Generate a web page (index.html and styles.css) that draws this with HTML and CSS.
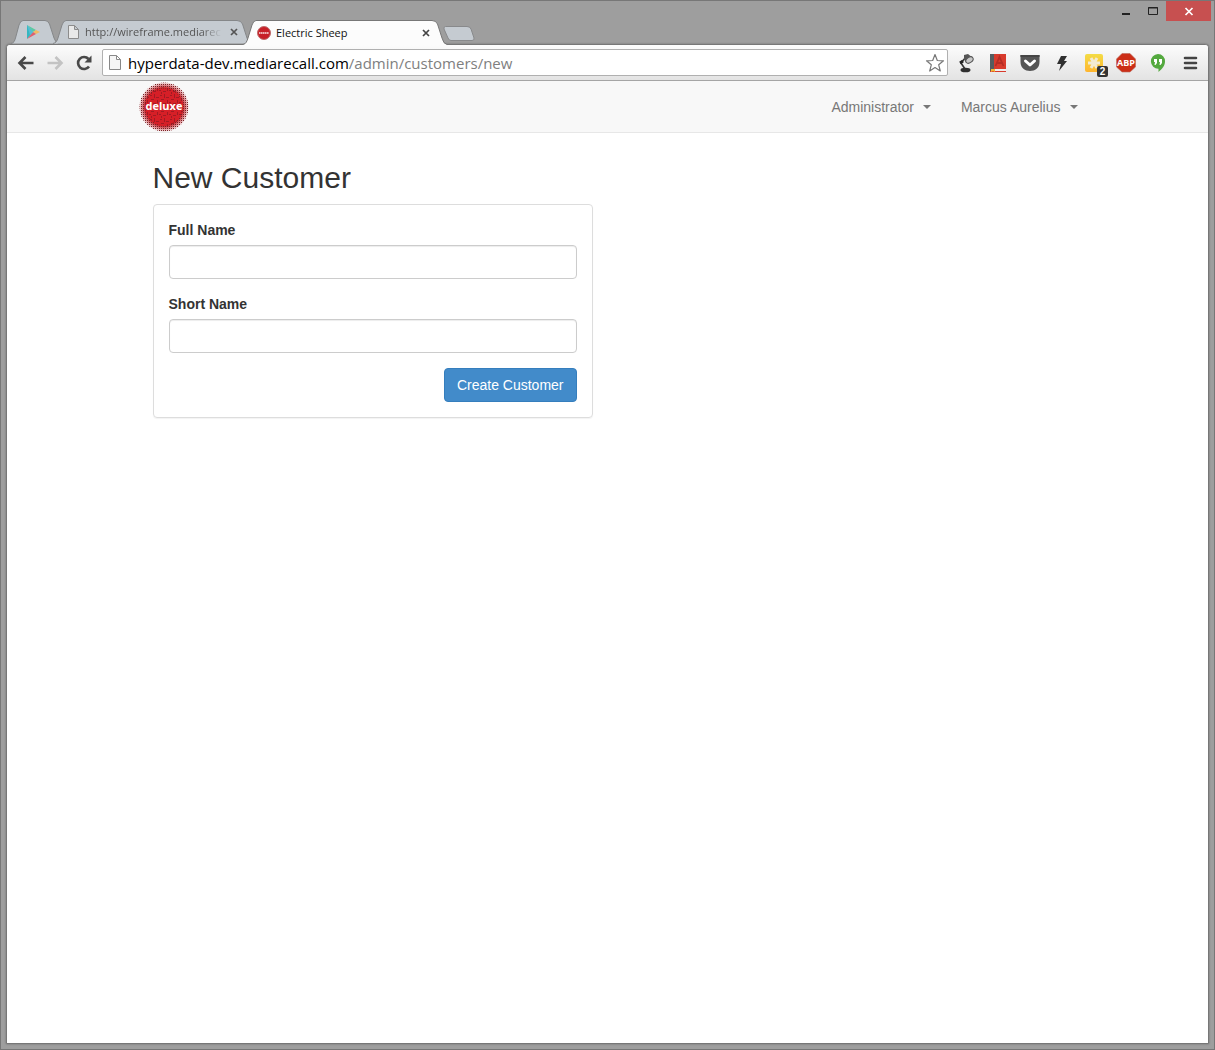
FILE: index.html
```html
<!DOCTYPE html>
<html lang="en">
<head>
<meta charset="utf-8">
<title>Electric Sheep</title>
<link rel="stylesheet" href="styles.css">
</head>
<body>
<div class="frame">
  <header class="titlebar">
    <div class="tabs">
      <button class="tab tab-pinned" aria-label="Play Store">
        <svg class="tab-shape" viewBox="0 0 48 24"><path d="M0 23.5C3 23 3.500 21 4.500 18L8 5Q9.500.5 12 .5H34Q37 .5 38.500 4L43 18Q44.500 23 48 23.500" fill="#c5cbd1" stroke="#858789"/></svg>
        <svg class="icon" width="16" height="16" viewBox="0 0 16 16"><path d="M2 1V15L8 8z" fill="#35b7c0"/><path d="M2 1L11 6 8 8z" fill="#5bcaa3"/><path d="M11 6L15 8 11 10 8 8z" fill="#f1ba63"/><path d="M2 15L11 10 8 8z" fill="#dd6170"/><path d="M2 1L8 8 5 11z" fill="#54bdd6"/></svg>
      </button>
      <div class="tab tab-back">
        <svg class="tab-shape" viewBox="0 0 198 24"><path d="M0 23.500C3 23 4 21 5 18L9 5Q10.500.5 13 .5H184Q188 .5 189.500 4L194 18Q195.500 23 198 23.500" fill="#c5cbd1" stroke="#858789"/></svg>
        <svg class="icon" width="16" height="16" viewBox="0 0 16 16"><path d="M3.500 1.500H9.500L13.500 5.500V14.500H3.500zM9.500 1.500V5.500H13.500" fill="#e9e9e9" stroke="#8c8c8c"/></svg>
        <button class="tab-title">http://wireframe.mediarec</button>
        <button class="tab-close" aria-label="Close tab"><svg width="8" height="8" viewBox="0 0 8 8"><path d="M1 1L7 7M7 1L1 7" stroke="#555" stroke-width="1.700"/></svg></button>
      </div>
      <div class="tab tab-active">
        <svg class="tab-shape" viewBox="0 0 204 25"><path d="M0 24.500C3 24 4 21 5 18L9 5Q10.500.5 13 .5H189Q193 .5 194.500 4L199 18Q200.500 24 204 24.500V25H0z" fill="#fcfcfc"/><path d="M0 24.500C3 24 4 21 5 18L9 5Q10.500.5 13 .5H189Q193 .5 194.500 4L199 18Q200.500 24 204 24.500" fill="none" stroke="#777"/></svg>
        <svg class="icon" width="16" height="16" viewBox="0 0 16 16"><circle cx="8" cy="8" r="6.500" fill="#c71f27" stroke="#bd6c6c"/><path d="M3 8H13" stroke="#edb0b3" stroke-width="2" stroke-dasharray="1.500 .4"/></svg>
        <button class="tab-title">Electric Sheep</button>
        <button class="tab-close" aria-label="Close tab"><svg width="8" height="8" viewBox="0 0 8 8"><path d="M1 1L7 7M7 1L1 7" stroke="#444" stroke-width="1.700"/></svg></button>
      </div>
      <button class="new-tab" aria-label="New tab"><svg width="34" height="18" viewBox="0 0 34 18"><path d="M3.500 1.500H25Q28 1.500 29 4L32 13Q32.500 15.500 30 15.500H9Q7 15.500 6 13L2 4Q1.500 1.500 3.500 1.500z" fill="#c5cbd1" stroke="#88898b"/></svg></button>
    </div>
    <div class="controls">
      <button class="control" aria-label="Minimise"><svg width="12" height="12" viewBox="0 0 12 12"><path d="M2 9H10" stroke="#222" stroke-width="2"/></svg></button>
      <button class="control" aria-label="Maximise"><svg width="12" height="12" viewBox="0 0 12 12"><path d="M1.500 2.500H10.500V9.500H1.500zM1 3H11" fill="none" stroke="#222"/></svg></button>
      <button class="control control-close" aria-label="Close"><svg width="12" height="12" viewBox="0 0 12 12"><path d="M2.500 3L9.500 10M9.500 3L2.500 10" stroke="#fff" stroke-width="1.700"/></svg></button>
    </div>
  </header>

  <div class="window">
    <div class="toolbar">
      <button class="nav-button" aria-label="Back"><svg width="18" height="18" viewBox="0 0 18 18"><path d="M16.500 9H4M8.500 3L2.500 9L8.500 15" fill="none" stroke="#494949" stroke-width="2.600"/></svg></button>
      <button class="nav-button" aria-label="Forward"><svg width="18" height="18" viewBox="0 0 18 18"><path d="M1.500 9H14M9.500 3L15.500 9L9.500 15" fill="none" stroke="#c3c3c3" stroke-width="2.600"/></svg></button>
      <button class="nav-button" aria-label="Reload"><svg width="18" height="18" viewBox="0 0 18 18"><path d="M14 12.500A6 6 0 1 1 13.500 5" fill="none" stroke="#494949" stroke-width="2.600"/><path d="M16.500 1.500V8.500H9.500z" fill="#494949"/></svg></button>
      <div class="omnibox">
        <svg width="16" height="18" viewBox="0 0 16 18"><path d="M2.500 1.500H9.500L13.500 5.500V15.500H2.500zM9.500 1.500V5.500H13.500" fill="#f5f5f5" stroke="#888"/></svg>
        <div class="address" role="textbox" aria-label="Address" contenteditable="true" spellcheck="false"><span class="host">hyperdata-dev.mediarecall.com</span>/admin/customers/new</div>
        <button class="star" aria-label="Bookmark"><svg width="20" height="20" viewBox="0 0 20 20"><path d="M10 1.500L12.300 7.500 18.500 7.800 13.700 11.800 15.300 18 10 14.500 4.700 18 6.300 11.800 1.500 7.800 7.700 7.500z" fill="#fff" stroke="#777" stroke-width="1.200" stroke-linejoin="round"/></svg></button>
      </div>
      <button class="extension" aria-label="Desk lamp"><svg width="20" height="20" viewBox="0 0 20 20"><ellipse cx="9.500" cy="17" rx="5" ry="2.300" fill="#303030"/><path d="M9 16L5 10L10 4" fill="none" stroke="#333" stroke-width="1.600"/><path d="M4 10L7 8" stroke="#222" stroke-width="3"/><path d="M8 2L12 1L17 5L10 10L8 6z" fill="#555"/><ellipse cx="13.500" cy="7" rx="4" ry="2.700" transform="rotate(-35 13.500 7)" fill="#c8c8c8" stroke="#555"/></svg></button>
      <button class="extension" aria-label="Dictionary"><svg width="20" height="20" viewBox="0 0 20 20"><path d="M2 1H18V19H2z" fill="#d83b2d"/><path d="M2 1H6V17L2 18z" fill="#555d60"/><path d="M5 16H18V18H5z" fill="#eee"/><path d="M7.500 13L11.500 4L15.500 13M9 10H14" fill="none" stroke="#b52d25" stroke-width="1.800"/><path d="M3 16H7V19L5 18L3 19z" fill="#f2b735"/></svg></button>
      <button class="extension" aria-label="Pocket"><svg width="20" height="20" viewBox="0 0 20 20"><path d="M.5 2H19.500V9C19.500 15 15 18 10 18S.5 15 .5 9z" fill="#555"/><path d="M.5 3H19.500" stroke="#444" stroke-width="2"/><path d="M5.500 8L10 12L14.500 8" fill="none" stroke="#fff" stroke-width="3" stroke-linecap="round" stroke-linejoin="round"/></svg></button>
      <button class="extension" aria-label="Lightning"><svg width="20" height="20" viewBox="0 0 20 20"><path d="M9 3H15L12 8H15L7 18L9 11H5z" fill="#303030"/></svg></button>
      <button class="extension" aria-label="Notes, 2 new">
        <svg width="20" height="20" viewBox="0 0 20 20"><defs><linearGradient id="note" x2="0" y2="1"><stop stop-color="#f3dc46"/><stop offset="1" stop-color="#ffb52e"/></linearGradient></defs><rect x="1" y="1" width="18" height="18" rx="2" fill="url(#note)"/><path d="M4 10H16M7 5L13 15M13 5L7 15" stroke="#f3ead2" stroke-width="3"/></svg>
        <span class="badge">2</span>
      </button>
      <button class="extension" aria-label="Adblock Plus"><svg width="20" height="20" viewBox="0 0 20 20"><path d="M6 .5H14L19.500 6V14L14 19H6L.5 14V6z" fill="#cc2e17" stroke="#bb6a5c" stroke-width=".6"/><text x="10" y="13" text-anchor="middle" class="abp">ABP</text></svg></button>
      <button class="extension" aria-label="Hangouts"><svg width="20" height="20" viewBox="0 0 20 20"><path d="M10 1A7 7 0 0 1 17 8.500C17 13 14 16 10.500 19V15.700A7 7 0 1 1 10 1z" fill="#54a93f"/><path d="M6 6H9V10L7.500 12H6.500L7 9H6zM11 6H14V10L12.500 12H11.500L12 9H11z" fill="#fff"/></svg></button>
      <button class="extension" aria-label="Menu"><svg width="20" height="20" viewBox="0 0 20 20"><path d="M5 5H16M5 10H16M5 15H16" stroke="#444" stroke-width="2.600" stroke-linecap="round"/></svg></button>
    </div>

    <nav class="navbar">
      <div class="container navbar-inner">
        <a class="brand" href="#" aria-label="deluxe">
          <svg width="50" height="50" viewBox="0 0 50 50">
            <defs>
              <pattern id="dots" width="2" height="2" patternUnits="userSpaceOnUse"><rect width="1" height="1" fill="#7b2226"/></pattern>
              <pattern id="grain" width="10" height="12" patternUnits="userSpaceOnUse"><path d="M1 1h2v1h-2zM5 0h1v4h-1zM7 3h3v1h-3zM2 5h3v1h-3zM8 6h1v3h-1zM0 8h2v1h-2zM4 9h3v1h-3zM2 10h1v2h-1z" fill="#821920" opacity=".65"/></pattern>
              <radialGradient id="halo"><stop offset=".8" stop-color="#cf4a50"/><stop offset="1" stop-color="#cf4a50" stop-opacity="0"/></radialGradient>
            </defs>
            <circle cx="25" cy="25" r="25" fill="url(#halo)"/>
            <circle cx="25" cy="25" r="19.500" fill="#d61f27"/>
            <circle cx="25" cy="25" r="19.500" fill="url(#grain)"/>
            <circle cx="25" cy="25" r="21.500" fill="none" stroke="url(#dots)" stroke-width="6"/>
            <text x="25" y="28" text-anchor="middle" class="brand-text">deluxe</text>
          </svg>
        </a>
        <div class="menus">
          <button class="menu">Administrator<span class="caret"></span></button>
          <button class="menu">Marcus Aurelius<span class="caret"></span></button>
        </div>
      </div>
    </nav>

    <main class="container page">
      <div class="column">
        <h1>New Customer</h1>
        <form class="panel">
          <label for="full-name">Full Name</label>
          <input id="full-name" type="text">
          <label for="short-name">Short Name</label>
          <input id="short-name" type="text">
          <button class="submit" type="button">Create Customer</button>
        </form>
      </div>
    </main>
  </div>
</div>
</body>
</html>
```
FILE: styles.css
```css
* { box-sizing: border-box; }

body {
  margin: 0;
  color: #333;
  font: 14px/20px "Liberation Sans", Arial, sans-serif;
}

button {
  margin: 0;
  padding: 0;
  border: 0;
  background: none;
  color: inherit;
  font: inherit;
}

svg { display: block; flex: none; }

.frame {
  display: flex;
  flex-direction: column;
  min-height: 100vh;
  padding: 0 5px 5px;
  border: 1px solid #777;
  background: #9e9e9e;
}

/* Tab strip and window controls */
.titlebar {
  display: flex;
  justify-content: space-between;
  height: 43px;
  margin-right: -2px;
}

.tabs {
  display: flex;
  align-items: flex-end;
  padding-left: 5px;
  font: 11px/16px "Open Sans", "Noto Sans", sans-serif;
}

.tab {
  position: relative;
  display: flex;
  align-items: center;
  height: 24px;
}

.tab-shape {
  position: absolute;
  inset: 0;
  width: 100%;
  height: 100%;
}

.icon { position: relative; }

.tab-pinned { width: 48px; padding-left: 14px; }
.tab-back { width: 198px; margin-left: -6px; padding: 0 13px 0 12px; color: #555; }
.tab-active { z-index: 1; width: 204px; margin: 0 0 -1px -8px; padding: 0 17px 0 13px; color: #111; height: 25px; }

.tab-title {
  position: relative;
  flex: 1;
  min-width: 0;
  margin: 0 8px 0 4px;
  overflow: hidden;
  text-align: left;
  white-space: nowrap;
}

.tab-back .tab-title { mask-image: linear-gradient(to right, #000 85%, transparent); }
.tab-close { position: relative; }
.new-tab { margin: 0 0 1px -5px; }

.controls { display: flex; align-items: flex-start; }
.control { display: grid; place-items: center; width: 27px; height: 20px; }
.control-close { width: 45px; background: #c75050; }

/* Browser window */
.window {
  display: flex;
  flex: 1;
  flex-direction: column;
  border: 1px solid #777;
  border-radius: 4px 4px 0 0;
  background: #fff;
  box-shadow: 0 0 2px #666;
}

.toolbar {
  display: flex;
  align-items: center;
  height: 36px;
  padding: 0 2px 0 4px;
  border-bottom: 1px solid #a5a5a5;
  border-radius: 3px 3px 0 0;
  background: linear-gradient(#fcfcfc, #e3e3e3);
}

.nav-button { display: grid; place-items: center; width: 29px; height: 28px; }

.omnibox {
  display: flex;
  flex: 1;
  align-items: center;
  min-width: 0;
  height: 27px;
  margin: 0 2px 0 4px;
  padding: 0 2px 0 4px;
  border: 1px solid #b0b0b0;
  border-radius: 2px;
  background: #fff;
}

.address {
  flex: 1;
  min-width: 0;
  margin-left: 5px;
  overflow: hidden;
  color: #808080;
  font: 15px/24px "Open Sans", "Noto Sans", sans-serif;
  white-space: nowrap;
}

.host { color: #000; }

.extension {
  position: relative;
  display: grid;
  place-items: center;
  width: 32px;
  height: 28px;
}

.badge {
  position: absolute;
  right: 2px;
  bottom: 0;
  width: 11px;
  height: 11px;
  border-radius: 2px;
  background: #333;
  color: #fff;
  font: bold 10px/11px "Liberation Sans", Arial, sans-serif;
}

.abp { fill: #fff; font: bold 9px "Open Sans", sans-serif; }

/* Web page */
.container {
  width: 100%;
  max-width: 970px;
  margin: 0 auto;
  padding: 0 15px;
}

.navbar { border-bottom: 1px solid #e7e7e7; background: #f8f8f8; }
.navbar-inner { display: flex; align-items: center; justify-content: space-between; }
.brand { padding: 1px 0 0 1px; }
.brand-text { fill: #fff; font: bold 11px "Open Sans", sans-serif; }
.menus { display: flex; gap: 30px; color: #777; }
.menu { display: flex; align-items: center; gap: 9px; }
.caret { border: 4px solid transparent; border-top-color: #777; border-bottom: 0; }

.page { padding-top: 28px; }
.column { width: 50%; padding: 0 15px; }
h1 { margin: 0 0 10px; font-size: 30px; font-weight: 400; line-height: 33px; }

.panel {
  display: flex;
  flex-direction: column;
  padding: 15px;
  border: 1px solid #ddd;
  border-radius: 4px;
  box-shadow: 0 1px 1px rgba(0, 0, 0, .05);
}

.panel label { margin-bottom: 5px; font-weight: 700; }

.panel input {
  width: 100%;
  height: 34px;
  margin: 0 0 15px;
  padding: 6px 12px;
  border: 1px solid #ccc;
  border-radius: 4px;
  background: #fff;
  box-shadow: inset 0 1px 1px rgba(0, 0, 0, .075);
  color: #555;
  font: inherit;
}

.submit {
  align-self: flex-end;
  padding: 6px 12px;
  border: 1px solid #357ebd;
  border-radius: 4px;
  background: #428bca;
  color: #fff;
}
```
